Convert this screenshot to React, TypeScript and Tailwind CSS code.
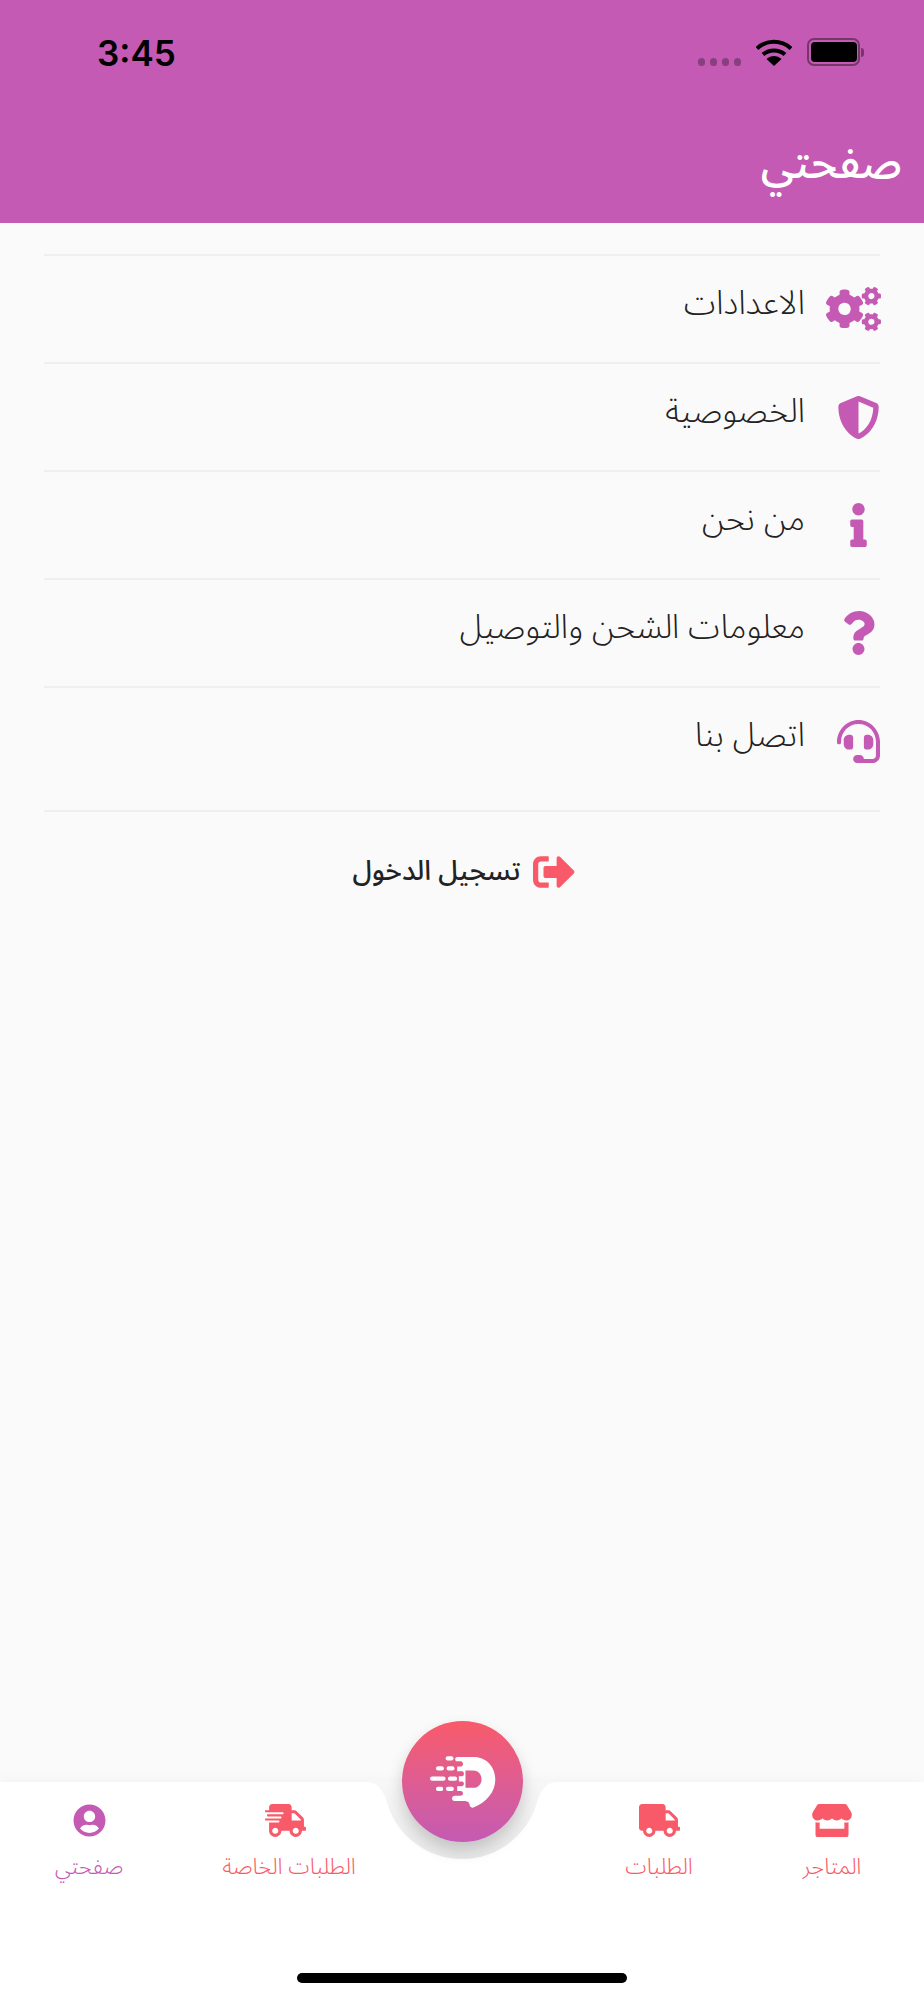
import React from 'react';
import {
  FaCogs,
  FaShieldAlt,
  FaInfo,
  FaQuestion,
  FaHeadset,
  FaSignOutAlt,
  FaTruck,
  FaShippingFast,
  FaStore,
  FaUserCircle,
} from 'react-icons/fa';

const arabicFont = "font-['Noto_Sans_Arabic','Noto_Sans','DejaVu_Sans',sans-serif]";

const menuItems = [
  { label: 'الاعدادات', icon: <FaCogs className="w-[55px] h-[44px] -translate-x-[5px] shrink-0" /> },
  { label: 'الخصوصية', icon: <FaShieldAlt className="w-[43px] h-[43px] shrink-0" /> },
  { label: 'من نحن', icon: <FaInfo className="w-[17px] h-[44px] shrink-0" /> },
  { label: 'معلومات الشحن والتوصيل', icon: <FaQuestion className="w-[33px] h-[44px] shrink-0" /> },
  { label: 'اتصل بنا', icon: <FaHeadset className="w-[43px] h-[43px] shrink-0" /> },
];

function StatusBar() {
  return (
    <div className="h-[106px] flex items-start justify-between pl-[97px] pr-[60px] pt-[33px]">
      <span className="font-['Inter',sans-serif] font-semibold text-[35px] leading-[40px] text-black">3:45</span>
      <div className="flex items-end gap-[15px] pt-[5px]">
        <div className="flex gap-[5px]">
          <span className="w-[7px] h-[8px] rounded-full bg-black/30" />
          <span className="w-[7px] h-[8px] rounded-full bg-black/30" />
          <span className="w-[7px] h-[8px] rounded-full bg-black/30" />
          <span className="w-[7px] h-[8px] rounded-full bg-black/30" />
        </div>
        <svg viewBox="0 0 36 27" className="w-[36px] h-[27px]">
          <path d="M1 9.5C10.5 0.5 25.5 0.5 35 9.5" fill="none" stroke="#000" strokeWidth="4" />
          <path d="M7 15.5C13 10 23 10 29 15.5" fill="none" stroke="#000" strokeWidth="4" />
          <path d="M10.5 20L18 27L25.5 20C21 16 15 16 10.5 20Z" fill="#000" />
        </svg>
        <div className="flex items-center">
          <div className="w-[53px] h-[28px] rounded-[7px] border-2 border-black/40 flex items-center justify-center">
            <div className="w-[46px] h-[20px] rounded-[4px] bg-black" />
          </div>
          <div className="w-[3px] h-[9px] rounded-r-full bg-black/40 ml-[1px]" />
        </div>
      </div>
    </div>
  );
}

function BottomNavItem({ label, icon, color, width, labelClass = '' }: { label: string; icon: React.ReactNode; color: string; width: string; labelClass?: string }) {
  return (
    <div className={`flex flex-col items-center shrink-0 ${width} ${color}`}>
      <div className="h-[34px] flex items-center justify-center">{icon}</div>
      <span className={`text-[22px] font-light leading-[28px] mt-[16px] whitespace-nowrap ${labelClass}`}>{label}</span>
    </div>
  );
}

function FabLogo() {
  return (
    <svg viewBox="200 160 215 175" className="w-[72px] h-[58px]">
      <path
        fillRule="evenodd"
        fill="#fff"
        d="M290 172H340C378 172 405 202 405 240C405 278 378 308 342 323C335 327 328 325 327 315C327 307 318 305 305 305H282C272 305 272 290 282 289H300C310 289 310 275 300 275H290V260H305C312 260 312 246 305 246H295V230H305C312 230 312 215 305 215H290V201H300C310 201 310 185 300 185H290C282 185 282 172 290 172ZM315 213V265H338C372 265 372 213 338 213Z"
      />
      <rect x="255" y="170" width="24" height="13" rx="6.5" fill="#fff" />
      <rect x="226" y="200" width="24" height="13" rx="6.5" fill="#fff" />
      <rect x="258" y="200" width="24" height="13" rx="6.5" fill="#fff" />
      <rect x="208" y="231" width="47" height="13" rx="6.5" fill="#fff" />
      <rect x="262" y="231" width="28" height="13" rx="6.5" fill="#fff" />
      <rect x="226" y="262" width="22" height="13" rx="6.5" fill="#fff" />
      <rect x="256" y="262" width="24" height="13" rx="6.5" fill="#fff" />
    </svg>
  );
}

function BottomNav() {
  return (
    <div className="relative h-[218px] bg-white shadow-[0_-2px_12px_rgba(0,0,0,0.03)]">
      {/* notch behind the round button */}
      <svg viewBox="0 0 224 80" className="absolute left-[350px] top-0 w-[224px] h-[80px]">
        <defs>
          <linearGradient id="notchFill" x1="0" y1="0" x2="0" y2="1">
            <stop offset="0" stopColor="#f7f7f7" />
            <stop offset="1" stopColor="#e9e9e9" />
          </linearGradient>
        </defs>
        <path
          d="M16 0C28 0 33 8 37 20C46 54 78 77 112 77C146 77 178 54 187 20C191 8 196 0 208 0Z"
          fill="url(#notchFill)"
        />
      </svg>
      <div className="absolute left-[402px] -top-[61px] w-[121px] h-[121px] rounded-full bg-gradient-to-b from-[#f95a69] to-[#c45ab3] shadow-[0_8px_16px_rgba(0,0,0,0.18)] flex items-center justify-center">
        <FabLogo />
      </div>
      <div className="flex items-start pt-[21px]" dir="ltr">
        <BottomNavItem width="w-[178px]" color="text-[#c45ab3]" label="صفحتي" icon={<FaUserCircle className="w-[33px] h-[33px]" />} />
        <BottomNavItem width="w-[214px]" color="text-[#f95a69]" label="الطلبات الخاصة" labelClass="ml-[8px]" icon={<FaShippingFast className="w-[41px] h-[33px]" />} />
        <div className="w-[140px] shrink-0" />
        <BottomNavItem width="w-[254px]" color="text-[#f95a69]" label="الطلبات" icon={<FaTruck className="w-[41px] h-[33px]" />} />
        <BottomNavItem width="w-[92px]" color="text-[#f95a69]" label="المتاجر" icon={<FaStore className="w-[40px] h-[33px]" />} />
      </div>
      <div className="absolute left-[297px] bottom-[17px] w-[330px] h-[10px] rounded-full bg-black" />
    </div>
  );
}

export default function App() {
  return (
    <div className={`w-[924px] h-[2000px] flex flex-col bg-[#fafafa] overflow-hidden ${arabicFont}`}>
      <header className="h-[223px] shrink-0 bg-[#c45ab3]">
        <StatusBar />
        <h1 dir="rtl" className="pr-[22px] text-white text-[44px] font-medium leading-[60px] pt-[28px]">صفحتي</h1>
      </header>

      <main dir="rtl" className="flex-1 px-[44px] pt-[31px]">
        {menuItems.map((item, i) => (
          <div
            key={item.label}
            className={`flex items-center gap-[31px] border-t-2 border-[#efefef] ${i === menuItems.length - 1 ? 'h-[124px] pb-[16px]' : 'h-[108px]'}`}
          >
            <div className="w-[44px] flex justify-center text-[#c45ab3] shrink-0">{item.icon}</div>
            <span className="text-[33px] font-light leading-[40px] text-[#222] -mt-[11px]">{item.label}</span>
          </div>
        ))}
        <div className="border-t-2 border-[#efefef] pt-[39px] flex items-center justify-center gap-[12px] pl-[3px]">
          <FaSignOutAlt className="w-[42px] h-[42px] text-[#f95a69] shrink-0" />
          <span className="text-[27.5px] leading-[38px] font-medium text-[#222] -mt-[2px]">تسجيل الدخول</span>
        </div>
      </main>

      <BottomNav />
    </div>
  );
}
